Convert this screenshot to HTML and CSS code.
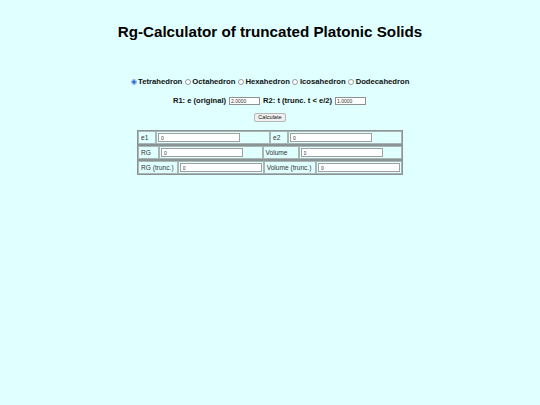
FILE: index.html
```html
<!DOCTYPE html>
<html>
<head>
<meta charset="utf-8">
<link rel="stylesheet" href="styles.css">
</head>
<body>
<h1 class="title">Rg-Calculator of truncated Platonic Solids</h1>
<form class="form">
  <div class="solids">
    <label class="opt"><input type="radio" name="s" class="radio" checked>Tetrahedron</label>
    <label class="opt"><input type="radio" name="s" class="radio">Octahedron</label>
    <label class="opt"><input type="radio" name="s" class="radio">Hexahedron</label>
    <label class="opt"><input type="radio" name="s" class="radio">Icosahedron</label>
    <label class="opt"><input type="radio" name="s" class="radio">Dodecahedron</label>
  </div>
  <div class="params">
    <span class="plabel">R1: e (original)</span>
    <input class="pin" type="text" value="2.0000">
    <span class="plabel">R2: t (trunc. t &lt; e/2)</span>
    <input class="pin" type="text" value="1.0000">
  </div>
  <div class="btnrow"><button type="button" class="btn">Calculate</button></div>
  <div class="results">
    <table class="rt">
      <tr>
        <td class="lab w18">e1</td>
        <td class="val"><input class="rin" type="text" value="0"></td>
        <td class="lab w18">e2</td>
        <td class="val"><input class="rin" type="text" value="0"></td>
      </tr>
    </table>
    <table class="rt">
      <tr>
        <td class="lab w20">RG</td>
        <td class="val"><input class="rin" type="text" value="0"></td>
        <td class="lab w35">Volume</td>
        <td class="val"><input class="rin" type="text" value="0"></td>
      </tr>
    </table>
    <table class="rt">
      <tr>
        <td class="lab w40">RG (trunc.)</td>
        <td class="val"><input class="rin" type="text" value="0"></td>
        <td class="lab w53">Volume (trunc.)</td>
        <td class="val"><input class="rin" type="text" value="0"></td>
      </tr>
    </table>
  </div>
</form>
</body>
</html>
```
FILE: styles.css
```css
html, body {
  margin: 0;
  padding: 0;
  background: #e0ffff;
  font-family: "Liberation Sans", Arial, sans-serif;
  color: #000;
}
body {
  width: 540px;
  height: 405px;
}
.title {
  margin: 0;
  padding-top: 23px;
  font-size: 15.2px;
  font-weight: bold;
  text-align: center;
  line-height: 18px;
}
.form {
  margin: 0;
  padding-top: 35px;
  display: flex;
  flex-direction: column;
  align-items: center;
}
.solids {
  display: flex;
  justify-content: center;
  font-size: 7.7px;
  font-weight: bold;
  line-height: 11px;
  gap: 2.5px;
  color: #111;
}
.opt {
  display: flex;
  align-items: center;
}
.radio {
  appearance: none;
  -webkit-appearance: none;
  width: 4px;
  height: 4px;
  margin: 0 1.5px 0 0;
  border: 0.6px solid #9a9a9a;
  border-radius: 50%;
  background: #fff;
  box-sizing: content-box;
}
.radio:checked {
  border-color: #8fb3e8;
  background: radial-gradient(circle, #2f6fd6 0 1.5px, #fff 2px);
}
.params {
  margin-top: 8px;
  display: flex;
  align-items: center;
  font-size: 7.6px;
  font-weight: bold;
  line-height: 11px;
  gap: 2px;
  color: #111;
}
.pin {
  width: 27px;
  height: 6px;
  padding: 0 1px;
  margin: 0 1px;
  font-family: "Liberation Sans", Arial, sans-serif;
  font-size: 5px;
  border: 1px solid #8f8f8f;
  background: #fff;
  color: #333;
}
.btnrow {
  margin-top: 7px;
  display: flex;
  line-height: 0;
}
.btn {
  font-family: "Liberation Sans", Arial, sans-serif;
  font-size: 5.6px;
  height: 9px;
  padding: 0 3px;
  line-height: 7px;
  background: #efefef;
  border: 1px solid #b5b5b5;
  border-radius: 2px;
  color: #222;
}
.results {
  margin-top: 8px;
  width: 266px;
  display: flex;
  flex-direction: column;
}
.rt {
  width: 266px;
  border-collapse: separate;
  border-spacing: 0;
  border: 1px solid #8a9494;
  table-layout: auto;
}
.rt td {
  border: 1px solid #aab6b6;
  height: 11px;
  padding: 0 1px;
  font-size: 6.6px;
  line-height: 8px;
  white-space: nowrap;
  color: #333;
}
.lab {
  padding-left: 2px !important;
}
.w18 { width: 13px; }
.w20 { width: 16px; }
.w35 { width: 31px; }
.w40 { width: 36px; }
.w53 { width: 49px; }
.rin {
  display: block;
  width: 76px;
  height: 7px;
  padding: 0 2px;
  margin: 0;
  font-family: "Liberation Sans", Arial, sans-serif;
  font-size: 5px;
  border: 1px solid #a0a0a0;
  background: #fff;
  color: #333;
}
```
